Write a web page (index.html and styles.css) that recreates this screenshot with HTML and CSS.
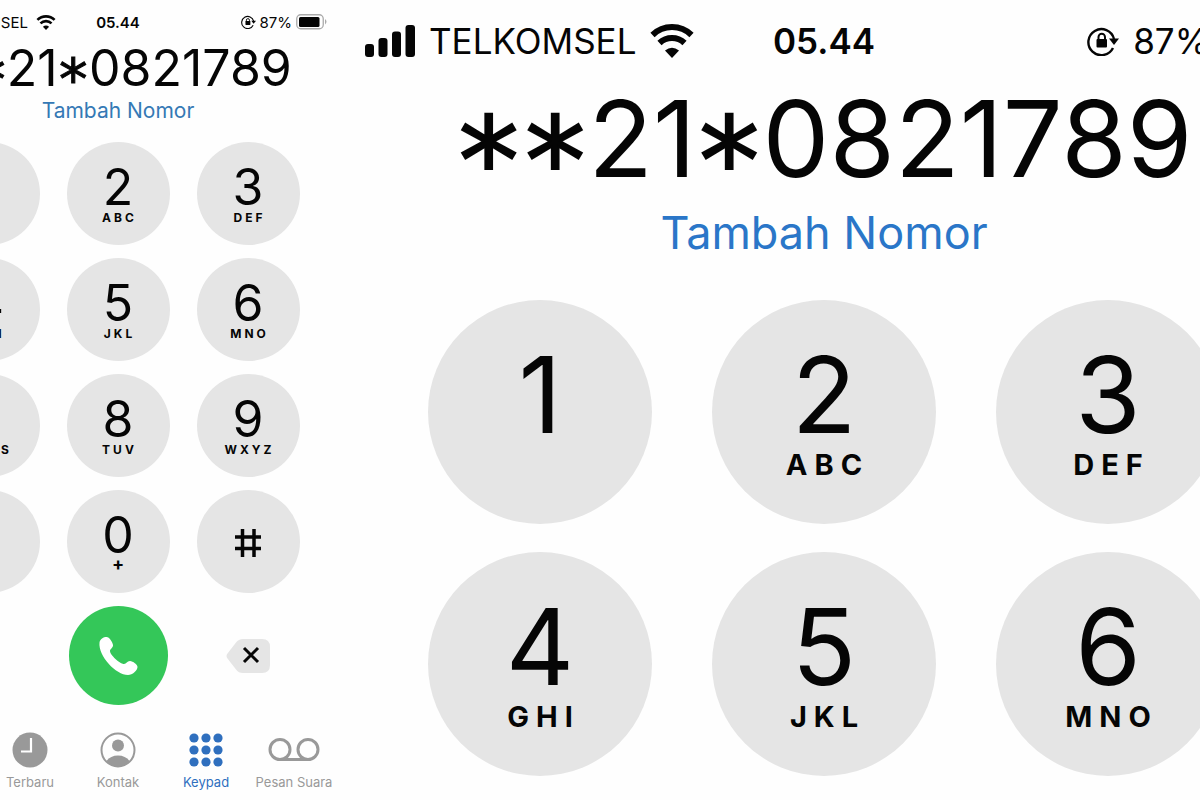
FILE: index.html
```html
<!DOCTYPE html>
<html lang="id">
<head>
<meta charset="utf-8">
<meta name="viewport" content="width=device-width, initial-scale=1">
<title>Keypad</title>
<link rel="stylesheet" href="styles.css">
</head>
<body>
<svg class="defs" aria-hidden="true">
  <symbol id="signal" viewBox="0 0 50 32">
    <rect x="0" y="19" width="9" height="13" rx="3"/><rect x="13.5" y="13" width="9" height="19" rx="3"/><rect x="27" y="6.500" width="9" height="25.500" rx="3"/><rect x="40.500" y="0" width="9.500" height="32" rx="3"/>
  </symbol>
  <symbol id="wifi" viewBox="0 0 44 34">
    <path d="M2.500 11a28 28 0 0 1 39 0M9.500 19a18 18 0 0 1 25 0" fill="none" stroke="currentColor" stroke-width="6"/>
    <path d="M15 26.500q7-5.500 14 0l-7 7.500z"/>
  </symbol>
  <symbol id="lock" viewBox="0 0 32 30">
    <path d="M26 22A13 13 0 1 1 27 13" fill="none" stroke="currentColor" stroke-width="2.400"/>
    <path d="M22 12.500h10l-5 6.500z"/>
    <rect x="9.500" y="13" width="10.500" height="8.500" rx="1"/>
    <path d="M11.500 14v-3a3.200 3.200 0 0 1 6.500 0v3" fill="none" stroke="currentColor" stroke-width="2"/>
  </symbol>
  <symbol id="battery" viewBox="0 0 32 16">
    <rect x=".75" y=".75" width="26.500" height="14" rx="4" fill="none" stroke="#aaa" stroke-width="1.300"/>
    <rect x="3" y="3" width="20.500" height="10" rx="1.500"/>
    <path d="M29 5q3 2.700 0 5.500z" fill="#aaa"/>
  </symbol>
</svg>
<main class="screens">
  <section class="pane" aria-label="Layar keypad">
    <div class="phone phone-small">
      <header class="status">
        <div class="status-side">
          <svg class="i-signal"><use href="#signal"/></svg><span>TELKOMSEL</span><svg class="i-wifi"><use href="#wifi"/></svg>
        </div>
        <time class="clock">05.44</time>
        <div class="status-side status-end">
          <svg class="i-lock"><use href="#lock"/></svg><span>87%</span><svg class="i-battery"><use href="#battery"/></svg>
        </div>
      </header>
      <p class="number"><span class="star">*</span><span class="star">*</span>21<span class="star">*</span>0821789</p>
      <button class="add" type="button">Tambah Nomor</button>
      <div class="keypad">
        <button class="key" type="button">1</button>
        <button class="key" type="button">2<span class="letters">ABC</span></button>
        <button class="key" type="button">3<span class="letters">DEF</span></button>
        <button class="key" type="button">4<span class="letters">GHI</span></button>
        <button class="key" type="button">5<span class="letters">JKL</span></button>
        <button class="key" type="button">6<span class="letters">MNO</span></button>
        <button class="key" type="button">7<span class="letters">PQRS</span></button>
        <button class="key" type="button">8<span class="letters">TUV</span></button>
        <button class="key" type="button">9<span class="letters">WXYZ</span></button>
        <button class="key key-symbol" type="button" aria-label="Bintang"><svg class="i-symbol" viewBox="0 0 28 28"><path d="M14 1v26M3 7.500l22 13M25 7.500l-22 13"/></svg></button>
        <button class="key" type="button">0<span class="letters plus">+</span></button>
        <button class="key key-symbol" type="button" aria-label="Pagar"><svg class="i-symbol" viewBox="0 0 28 28"><path d="M8.500 0v28M20 0v28M1 8h26M1 19.500h26"/></svg></button>
        <span></span>
        <button class="call" type="button" aria-label="Panggil">
          <svg class="i-call" viewBox="0 0 40 40"><path d="M1.500 6.500C2 3 5.500 1 8.500 1c3 0 6 5 6.500 8 .3 2.500-3 4-3 6 0 4 10 13 14 13 2.500 0 3-3 6-3 3 .2 7.500 3.500 7.500 6 0 3.500-5 8-9.500 8C18 39 0 20 1.500 6.500z"/></svg>
        </button>
        <button class="delete" type="button" aria-label="Hapus">
          <svg class="i-delete" viewBox="0 0 44 34"><path class="tag" d="M1.500 14.500L10 3.500Q12.500 0 17 0h19q8 0 8 8v18q0 8-8 8H17q-4.500 0-7-3.500l-8.500-11q-2-2.500 0-5z"/><path class="cross" d="M18 9l14 14M32 9l-14 14"/></svg>
        </button>
      </div>
      <nav class="tabs">
        <a class="tab" href="#favorit"><svg class="i-tab" viewBox="0 0 36 36"><path d="M18 1l5 12 12 1-9 8 3 12-11-7-11 7 3-12-9-8 12-1z"/></svg>Favorit</a>
        <a class="tab" href="#terbaru"><svg class="i-tab" viewBox="0 0 36 36"><circle cx="18" cy="18" r="17.500"/><path d="M19 6v13.500H9" fill="none" stroke="#fff" stroke-width="2.200"/></svg>Terbaru</a>
        <a class="tab" href="#kontak"><svg class="i-tab" viewBox="0 0 36 36"><circle cx="18" cy="18" r="16.500" fill="none" stroke="currentColor" stroke-width="2"/><circle cx="18" cy="13.500" r="6"/><path d="M6.500 29q4-5.500 11.500-5.500T29.500 29Q25 34.500 18 34.500T6.500 29z"/></svg>Kontak</a>
        <a class="tab tab-active" href="#keypad" aria-current="page"><svg class="i-tab" viewBox="0 0 36 36"><circle cx="6" cy="6" r="4.600"/><circle cx="18" cy="6" r="4.600"/><circle cx="30" cy="6" r="4.600"/><circle cx="6" cy="18" r="4.600"/><circle cx="18" cy="18" r="4.600"/><circle cx="30" cy="18" r="4.600"/><circle cx="6" cy="30" r="4.600"/><circle cx="18" cy="30" r="4.600"/><circle cx="30" cy="30" r="4.600"/></svg>Keypad</a>
        <a class="tab" href="#pesan-suara"><svg class="i-tab i-voicemail" viewBox="0 0 52 36"><g fill="none" stroke="currentColor" stroke-width="3"><circle cx="12" cy="17.500" r="10"/><circle cx="40" cy="17.500" r="10"/><path d="M12 27.500h28"/></g></svg>Pesan Suara</a>
      </nav>
    </div>
  </section>
  <section class="pane pane-zoom" aria-label="Layar keypad diperbesar">
    <div class="phone phone-large">
      <header class="status">
        <div class="status-side">
          <svg class="i-signal"><use href="#signal"/></svg><span>TELKOMSEL</span><svg class="i-wifi"><use href="#wifi"/></svg>
        </div>
        <time class="clock">05.44</time>
        <div class="status-side status-end">
          <svg class="i-lock"><use href="#lock"/></svg><span>87%</span><svg class="i-battery"><use href="#battery"/></svg>
        </div>
      </header>
      <p class="number"><span class="star">*</span><span class="star">*</span>21<span class="star">*</span>0821789</p>
      <button class="add" type="button">Tambah Nomor</button>
      <div class="keypad">
        <button class="key" type="button">1</button>
        <button class="key" type="button">2<span class="letters">ABC</span></button>
        <button class="key" type="button">3<span class="letters">DEF</span></button>
        <button class="key" type="button">4<span class="letters">GHI</span></button>
        <button class="key" type="button">5<span class="letters">JKL</span></button>
        <button class="key" type="button">6<span class="letters">MNO</span></button>
      </div>
    </div>
  </section>
</main>
</body>
</html>
```
FILE: styles.css
```css
* { box-sizing: border-box; }

body {
  margin: 0;
  background: #fefefe;
  color: #050505;
  font-family: Inter, "Liberation Sans", sans-serif;
}

button {
  border: 0;
  padding: 0;
  background: none;
  color: inherit;
  font: inherit;
  cursor: pointer;
}

svg { flex: none; fill: currentColor; }
.defs { display: none; }

.screens {
  display: grid;
  grid-template-columns: 43fr 107fr;
  min-height: 100vh;
  overflow: hidden;
}

.pane {
  display: flex;
  justify-content: flex-end;
  min-width: 0;
  padding-right: 6px;
  overflow: hidden;
}

.pane-zoom { justify-content: flex-start; padding-right: 0; }

.phone { flex: none; }

.phone-small {
  --key: 103px;
  --digit: 50px;
  width: 440px;
}

.phone-large {
  --key: 224px;
  --digit: 106px;
  width: 960px;
}

/* Status bar */
.status {
  display: grid;
  grid-template-columns: 1fr auto 1fr;
  align-items: center;
  height: 44px;
  padding: 0 10px;
  font-size: 15px;
}

.status-side { display: flex; align-items: center; gap: 8px; }
.status-end { justify-content: flex-end; }
.clock { font-weight: 600; }
.i-signal { width: 23px; height: 15px; }
.i-wifi { width: 20px; height: 15px; }
.i-lock { width: 15px; height: 14px; }
.i-battery { width: 32px; height: 16px; }

.phone-small .status-end { gap: 4px; }
.phone-large .status { height: 82px; padding: 0 21px; font-size: 35px; }
.phone-large .status-side { gap: 14px; }
.phone-large .i-signal { width: 50px; height: 32px; }
.phone-large .i-wifi { width: 44px; height: 34px; }
.phone-large .i-lock { width: 32px; height: 30px; }
.phone-large .i-battery { width: 60px; height: 30px; }

/* Dialled number */
.number {
  margin: 0;
  font-size: var(--digit);
  line-height: 48px;
  text-align: center;
  white-space: nowrap;
}

.star {
  display: inline-block;
  width: 0.55em;
  font-family: "DejaVu Sans", sans-serif;
  font-size: 114%;
  line-height: 0;
  text-align: center;
  vertical-align: -0.22em;
  -webkit-text-stroke: 1px currentColor;
}

.phone-large .number { line-height: 114px; }
.phone-large .star { -webkit-text-stroke-width: 2px; }

.add {
  display: block;
  width: 100%;
  margin-bottom: 12px;
  color: #3579b5;
  font-size: 21px;
  line-height: 38px;
}

.phone-large .add {
  margin-bottom: 30px;
  color: #2a76c8;
  font-size: 45px;
  line-height: 74px;
}

/* Keypad */
.keypad {
  display: grid;
  grid-template-columns: repeat(3, var(--key));
  justify-content: center;
  gap: 13px 27px;
}

.phone-large .keypad { gap: 28px 60px; }

.key {
  display: flex;
  flex-direction: column;
  align-items: center;
  width: var(--key);
  height: var(--key);
  padding-top: 22px;
  border-radius: 50%;
  background: #e5e5e5;
  font-size: var(--digit);
  line-height: 46px;
}

.phone-large .key { padding-top: 45px; line-height: 100px; }

.letters {
  padding-left: 3px;
  font-size: 12px;
  font-weight: 700;
  letter-spacing: 3px;
  line-height: 16px;
}

.plus { font-size: 18px; line-height: 12px; }

.phone-large .letters {
  padding-left: 7px;
  font-size: 29px;
  letter-spacing: 7px;
  line-height: 40px;
}

.key-symbol { justify-content: center; padding-top: 2px; }
.i-symbol { width: 28px; height: 28px; fill: none; stroke: currentColor; stroke-width: 3.5; }

.call {
  display: grid;
  place-items: center;
  justify-self: center;
  width: 99px;
  height: 99px;
  border-radius: 50%;
  background: #34c759;
  color: #fff;
}

.i-call { width: 40px; height: 40px; }
.delete { display: grid; place-items: center; }
.i-delete { width: 44px; height: 34px; }
.tag { fill: #e5e5e5; }
.cross { fill: none; stroke: #050505; stroke-width: 3; }

/* Tab bar */
.tabs {
  display: grid;
  grid-template-columns: repeat(5, 1fr);
  padding-top: 27px;
}

.tab {
  display: flex;
  flex-direction: column;
  align-items: center;
  gap: 5px;
  color: #999;
  font-size: 13px;
  line-height: 18px;
  text-decoration: none;
  white-space: nowrap;
}

.tab-active { color: #2f6fbe; }
.i-tab { width: 36px; height: 36px; }
.i-voicemail { width: 52px; }
```
